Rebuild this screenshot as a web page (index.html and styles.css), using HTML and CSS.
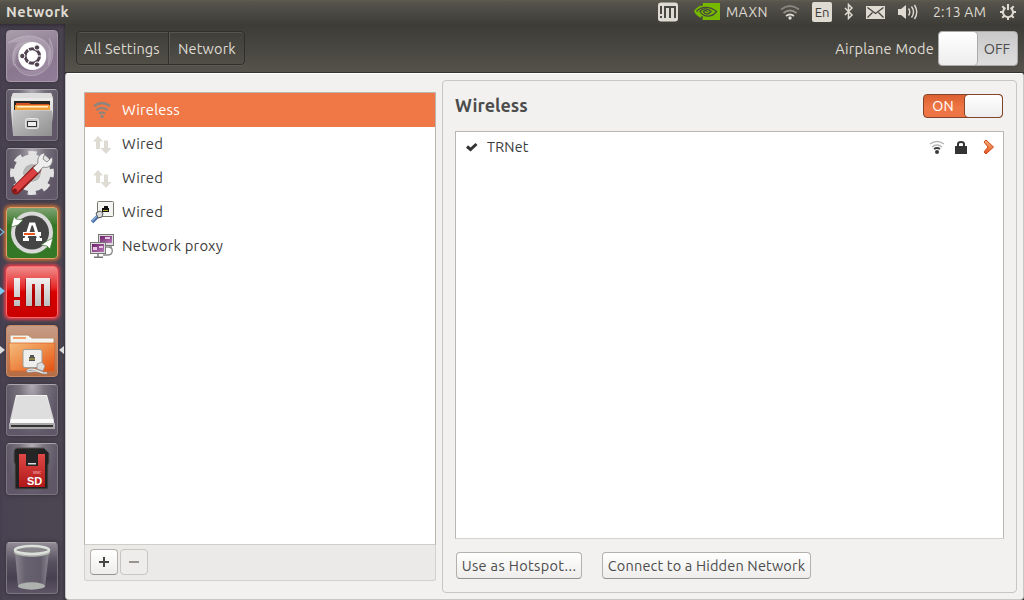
FILE: index.html
```html
<!DOCTYPE html>
<html lang="en">
<head>
<meta charset="utf-8">
<title>Network</title>
<link rel="stylesheet" href="styles.css">
</head>
<body>
<svg width="0" height="0" class="defs">
  <defs>
    <linearGradient id="silver" x2="0" y2="1"><stop offset="0" stop-color="#f2f2f2"/><stop offset="1" stop-color="#bdbdbd"/></linearGradient>
    <linearGradient id="cabinet" x2="1" y2="1"><stop offset="0" stop-color="#c9c9c9"/><stop offset="1" stop-color="#8f8f8f"/></linearGradient>
    <linearGradient id="red" x2="0" y2="1"><stop offset="0" stop-color="#e04848"/><stop offset="1" stop-color="#b01818"/></linearGradient>
    <linearGradient id="folder" x2="1" y2="1"><stop offset="0" stop-color="#f4bd7c"/><stop offset=".5" stop-color="#ee8a48"/><stop offset="1" stop-color="#e4500f"/></linearGradient>
    <linearGradient id="glass" x2="1" y2="0"><stop offset="0" stop-color="#8b8590"/><stop offset=".3" stop-color="#67606e"/><stop offset=".75" stop-color="#625b6a"/><stop offset="1" stop-color="#8b8590"/></linearGradient>
    <linearGradient id="purple" x2="1" y2="1"><stop offset="0" stop-color="#6c1f66"/><stop offset="1" stop-color="#b878b8"/></linearGradient>
    <linearGradient id="flame" x2="0" y2="1"><stop offset="0" stop-color="#f7b57c"/><stop offset="1" stop-color="#e8501c"/></linearGradient>
    <symbol id="updown" viewBox="0 0 24 24"><path fill="#dedbd2" d="M3 9.500 8 4l5 5.500h-3V17H6V9.500zM14 8.500h4V16h3.500L16 22l-5.500-6H14z"/></symbol>
  </defs>
</svg>

<header class="panel">
  <span class="panel-title">Network</span>
  <div class="indicators">
    <svg class="ind im" width="22" height="20" viewBox="0 0 22 20"><rect x="1" y=".5" width="20" height="19" rx="3" fill="#dfdbd2"/><path fill="#494741" d="M3 4h2v8H3zM3 14h2v2H3zM7 4h12v12h-2V6h-3v10h-2V6H9v10H7z"/></svg>
    <svg class="ind nvidia" width="27" height="18" viewBox="0 0 27 18"><path fill="#76b900" d="M9 0h18v17H9v-2C5 14 2 11 1 8c2-3 5-5 8-6z"/><path d="M3.500 8.500C8 3 17 3 23.500 8.500 19 14.500 11 15 7 8.500c3-4 8-3 11 0-3 3.500-6 3.500-7.500 0 1-1.500 3-1 4 .5M9 0v3m0 10v4" fill="none" stroke="#46463f" stroke-width="1.300"/></svg>
    <span class="maxn">MAXN</span>
    <svg class="ind wifi" width="22" height="16" viewBox="0 0 22 16"><g fill="none" stroke-width="1.800"><path d="M2 5.500q9-7 18 0" stroke="#88857d"/><path d="M4.500 9q6.500-5 13 0" stroke="#96938b"/><path d="M7 12q4-3 8 0" stroke="#dfdbd2"/></g><circle cx="11" cy="14" r="1.700" fill="#dfdbd2"/></svg>
    <span class="lang">En</span>
    <svg class="ind bt" width="10" height="18" viewBox="0 0 10 18"><path d="m1 5 7 7-3.500 3.500v-14L8 5l-7 7" fill="none" stroke="#dfdbd2" stroke-width="1.500"/></svg>
    <svg class="ind mail" width="19" height="13" viewBox="0 0 19 13"><path fill="#dfdbd2" d="M0 0h19v13H0z"/><path d="m1.500 1.500 8 6 8-6M1.500 11.500l5-5m11 5-5-5" fill="none" stroke="#45443d" stroke-width="1.300"/></svg>
    <svg class="ind vol" width="21" height="18" viewBox="0 0 21 18"><path fill="#dfdbd2" d="M1 6h3l5-4v14l-5-4H1z"/><path d="M11.500 5.500q2.500 3.500 0 7M14.500 3.500q4 5.500 0 11M17.500 2q4.500 7 0 14" fill="none" stroke="#dfdbd2" stroke-width="1.400"/></svg>
    <span class="clock">2:13 AM</span>
    <svg class="ind gear" width="16" height="16" viewBox="0 0 16 16"><g fill="none" stroke="#dfdbd2" stroke-width="2"><path d="M5.500 3.800a5 5 0 1 0 5 0"/><path d="M8 0v6M0 8h3m10 0h3M8 13v3M2.300 2.300l2.200 2.200m7 7 2.200 2.200m0-11.400-2.200 2.200m-7 7-2.200 2.200"/></g></svg>
  </div>
</header>

<div class="desktop">
  <nav class="launcher">
    <div class="tile dash"><svg viewBox="0 0 52 52"><path fill="#e3d8e2" opacity=".25" d="M2 13Q18 2 34 8c10 4 14 16 8 27 1-14-8-23-20-21C11 16 7 28 11 39 4 31 5 20 12 12z"/><path fill="#e3d8e2" opacity=".2" d="M43 8c7 12 5 28-8 35-11 6-23 1-26-9 9 9 20 9 27 1 8-9 7-19 7-27z"/><g fill="none" stroke="#d9ced8" stroke-opacity=".4"><path d="M2 13Q22 0 37 10c9 6 10 16 5 25M43 8c7 12 5 28-8 35-11 6-23 1-26-9M8 36C4 21 12 12 24 12"/></g><circle cx="26.300" cy="26" r="14" fill="#fff"/><circle cx="26.300" cy="26" r="7.200" fill="none" stroke="#50434f" stroke-width="3"/><path stroke="#fff" stroke-width="1.200" d="M26 26h10M26 26l-5-9M26 26l-5 9"/><circle cx="26.300" cy="26" r="5" fill="#fff"/><g fill="#50434f" stroke="#fff" stroke-width="1"><circle cx="16.300" cy="26" r="2.700"/><circle cx="31" cy="17.500" r="2.700"/><circle cx="31" cy="34.600" r="2.700"/></g></svg></div>

    <div class="tile"><svg viewBox="0 0 52 52"><path fill="url(#silver)" d="M7 4h38l2 6v12l-2 24H7L5 22V10z"/><path fill="#ddd" d="M7 4h38l2 5H5z"/><path fill="#292724" d="M8 12h36v11H8z"/><path fill="#d2522a" d="M10 14h13l2 1h18v7H10z"/><path fill="#f0a03a" d="M9 16h35v6H9z"/><path fill="#fff0c9" d="M11 17h31v1.500H11z"/><path fill="url(#cabinet)" d="M7 21h39v26H7z"/><path fill="#c9c9c9" d="M7 21h39v1H7z"/><rect x="19.500" y="29.500" width="13" height="10" rx="2" fill="#ccc" stroke="#e4e4e4"/><rect x="21.500" y="32.500" width="9" height="5" fill="#eee" stroke="#333"/></svg></div>

    <div class="tile"><svg viewBox="0 0 52 52"><g fill="none" stroke="#e2e2e2"><circle cx="26" cy="25" r="19.500" stroke-width="5" stroke-dasharray="8 7.315" transform="rotate(-12 26 25)"/><circle cx="26" cy="25" r="13.500" stroke-width="10"/></g><circle cx="26" cy="25" r="8.500" fill="#b5b5b5"/><path d="M10 42 31 21" stroke="#871a1a" stroke-width="9" stroke-linecap="round"/><path d="M10 41 31 21" stroke="#dc4040" stroke-width="6.500" stroke-linecap="round"/><path fill="#eee" stroke="#777" stroke-width=".8" d="m27 20 5-5c-1-5 2-10 7-10l-2 6 4 3 5-5c2 7-3 12-9 10l-5 6z"/><circle cx="9" cy="42.500" r="2" fill="#7d1919"/></svg></div>

    <div class="tile updater"><svg viewBox="0 0 52 52"><circle cx="26" cy="25.500" r="21" fill="#d9d9d9"/><circle cx="26" cy="25.500" r="17" fill="#454545"/><path fill="#fff" stroke="#39752d" stroke-width=".7" d="m5 20 3-11 2 3 7 1-5 5zM47 31l-3 11-3-3-6-1 6-4z"/><path d="M19.500 33 24.500 17h3.500l5 16" fill="none" stroke="#fff" stroke-width="3"/><path fill="#fff" d="M17 25h18v4H17z"/><path fill="#e9561c" d="M18 26h11v2H18z"/><path fill="#fff" d="M17 31h6v3h-6zM30 31h6v3h-6z"/></svg></div>

    <div class="tile install"><svg viewBox="0 0 52 52"><path fill="#8b0000" opacity=".5" d="M8 13h6v19H8zM8 34h6v7H8zM19 13h26v28H19z"/><path fill="url(#silver)" d="M8 12h6v19H8zM8 34h6v6H8zM20 12h24v28h-6V18h-3v22h-6V18h-3v22h-6z"/></svg></div>

    <div class="tile network"><svg viewBox="0 0 52 52"><path fill="#f3f3f0" stroke="#b88d70" d="M4 10h18l4 3h22v10H4z"/><path fill="#f1a06b" d="M7 12h13v2H7z"/><path fill="url(#folder)" stroke="#db6024" stroke-width=".7" d="M3 18h46l-1 28H4z"/><rect x="17" y="24.500" width="19" height="18" rx="2" fill="#eeeeec" stroke="#a09c93"/><path fill="#555" d="M23 32h1v-2h4v2h1v4h-6z"/><path d="M23 34h6" stroke="#c8b53a"/><path d="M41 48c-5 1-8-3-14-2-5 1-7 0-5-1 4-2 9 0 15 3" fill="none" stroke="#999" stroke-width="2.500"/><path d="M41 48c-5 1-8-3-14-2-5 1-7 0-5-1 4-2 9 0 15 3" fill="none" stroke="#eee"/><path fill="#ddd" stroke="#888" stroke-width=".7" d="m31 39 5-2 3 4-2 5-6-2z"/></svg></div>

    <div class="tile"><svg viewBox="0 0 52 52"><path fill="url(#silver)" d="M10 11h31l7 25v8H4v-8z"/><path fill="#dedede" d="M11 12h29l7 24H5z"/><path fill="#fafafa" d="M5 35h42l1 4H4z"/><path fill="#aaa" d="M3 39h46v6H3z"/><path fill="#333" d="M5 41h42v2H5z"/></svg></div>

    <div class="tile"><svg viewBox="0 0 52 52"><path fill="#222" stroke="#555" d="M11 5h27l5 5v10l-1 2v24H9V21l-1-2V8q1-3 3-3z"/><path fill="url(#red)" d="M13 11h26v33H13z"/><path fill="#252525" d="M20 6h12v17H20z"/><path fill="#ddd" d="M22 20h8v1.500h-8z"/><text x="27" y="30.500" class="mmc">MMC</text><text x="21" y="42" class="sd">SD</text></svg></div>

    <div class="tile trash"><svg viewBox="0 0 52 52"><path fill="url(#glass)" d="M9 10h34l-4 35q-13 4-27 0z"/><ellipse cx="25.500" cy="44" rx="13.500" ry="3.700" fill="#aeb2ae"/><path d="M8 8v3c4 5 32 5 36 0V8" fill="#aeb3ac"/><ellipse cx="26" cy="8" rx="17" ry="4" fill="#89878c" stroke="#dce0da" stroke-width="2.600"/></svg></div>

    <i class="pip pip-update"></i><i class="pip pip-install"></i><i class="pip pip-net"></i><i class="pip pip-active"></i>
  </nav>

  <main class="window">
    <div class="toolbar">
      <div class="crumbs"><span class="crumb all">All Settings</span><span class="crumb current">Network</span></div>
      <div class="airplane"><span class="airplane-label">Airplane Mode</span><span class="switch off"><b class="knob"></b><span class="state">OFF</span></span></div>
    </div>
    <div class="content">
      <aside class="devices">
        <ul class="device-list">
          <li class="row selected"><svg viewBox="0 0 24 24"><g fill="none" stroke="#8b857d" stroke-width="2.200"><path d="M4 8q8-6 16 0M6.500 12q5.500-4 11 0M9 15.500q3-2 6 0"/></g><circle cx="12" cy="18.500" r="1.700" fill="#8b857d"/></svg><span>Wireless</span></li>
          <li class="row"><svg><use href="#updown"/></svg><span>Wired</span></li>
          <li class="row"><svg><use href="#updown"/></svg><span>Wired</span></li>
          <li class="row"><svg viewBox="0 0 24 24"><rect x="7.500" y="1.500" width="16" height="15" rx="1" fill="#f4f4f2" stroke="#77776f"/><path fill="#111" d="M12 8h2V6h4v2h1v4h-7z"/><path d="M13 10.500h5" stroke="#bba728"/><path d="m2 22 8-8" stroke="#416ba2" stroke-width="3.500"/><path d="m2 21 7-7" stroke="#8eb1db" stroke-width="1.500"/><path fill="#ddd" stroke="#555" d="m6 13 4-2 3 2-1 4-4 1z"/></svg><span>Wired</span></li>
          <li class="row"><svg viewBox="0 0 24 24"><rect x="8.500" y=".5" width="15" height="11" fill="#ddd" stroke="#777"/><path fill="url(#purple)" d="M10 2h12v7H10z"/><path fill="#e6c6e5" d="M15 3h5v2h-5z"/><path d="M13 13h9" stroke="#aaa" stroke-width="2"/><path d="M19 13c5 1 4 8-1 8h-5" fill="none" stroke="#888" stroke-width="1.300"/><rect x=".5" y="8.500" width="15" height="11" fill="#ddd" stroke="#777"/><path fill="url(#purple)" d="M2 10h12v8H2z"/><path fill="#e6c6e5" d="M3 13h4v3H3zM9 12h4v2H9z"/><path d="M8 20v3M4 23.300h9" stroke="#777" stroke-width="1.500"/></svg><span>Network proxy</span></li>
        </ul>
        <div class="list-actions"><button class="btn add" aria-label="Add"></button><button class="btn remove" aria-label="Remove"></button></div>
      </aside>
      <section class="details">
        <div class="details-head"><h1>Wireless</h1><span class="switch on"><span class="state">ON</span><b class="knob"></b></span></div>
        <div class="networks">
          <div class="net">
            <svg class="check" width="12" height="10" viewBox="0 0 12 10"><path d="m1 4.500 3.500 3L10.500 2" fill="none" stroke="#333" stroke-width="3"/></svg>
            <span class="ssid">TRNet</span>
            <svg class="signal" width="16" height="14" viewBox="0 0 16 14"><g fill="none" stroke-width="1.500"><path d="M1 4q7-5 14 0M3 7q5-4 10 0" stroke="#b5b5b5"/><path d="M5 9q3-2 6 0" stroke="#3c3c3c" stroke-width="2"/></g><circle cx="8" cy="12" r="2" fill="#3c3c3c"/></svg>
            <svg class="lock" width="12" height="13" viewBox="0 0 12 13"><path fill="#333" d="M0 5h12v8H0z"/><path d="M3 6V3q0-2 3-2t3 2v3" fill="none" stroke="#333" stroke-width="2"/></svg>
            <svg class="arrow" width="12" height="16" viewBox="0 0 12 16"><path d="m1 3 2-2 7.500 7L3 15l-2-2 4-5z" fill="url(#flame)" stroke="#cf4619" stroke-linejoin="round"/></svg>
          </div>
        </div>
        <div class="details-actions"><button class="btn hotspot">Use as Hotspot...</button><button class="btn hidden-net">Connect to a Hidden Network</button></div>
      </section>
    </div>
  </main>
</div>
</body>
</html>
```

FILE: styles.css
```css
* { box-sizing: border-box; }
body {
  margin: 0; width: 1024px; height: 600px; overflow: hidden;
  display: flex; flex-direction: column;
  font: 15px/20px Ubuntu, "Noto Sans", sans-serif; color: #3c3c3c;
  white-space: nowrap;
}
.defs { position: absolute; }
svg { display: block; flex: none; }

.panel {
  height: 24px; flex: none; display: flex; align-items: center; justify-content: space-between;
  padding: 0 8px 0 6px; color: #dfdbd2;
  background: linear-gradient(#605e50, #55534b 10%, #3e3d38);
}
.panel-title { font-weight: 700; font-size: 14.500px; letter-spacing: .5px; }
.indicators { display: flex; align-items: center; font-size: 14px; }
.im { margin-right: 14px; }
.nvidia { margin-right: 6px; }
.maxn { width: 43px; margin-right: 10px; letter-spacing: .4px; }
.wifi { margin-right: 11px; }
.lang { width: 20px; height: 20px; margin-right: 12px; border-radius: 2px; background: #dfdbd2; color: #3d3c37; font-size: 13px; line-height: 20px; text-align: center; }
.bt { margin-right: 12px; }
.mail { margin-right: 12px; }
.vol { margin-right: 15px; }
.clock { width: 55px; margin-right: 12px; letter-spacing: .2px; }

.desktop { flex: 1; display: flex; min-height: 0; }
.launcher {
  position: relative; width: 65px; flex: none; display: flex; flex-direction: column; gap: 7px;
  padding: 6px 0 0 6px; background: linear-gradient(90deg, #494252, #4b4451 50%, #4c4552 95%, #3c3744);
  box-shadow: inset 0 4px 5px -3px #25222a;
}
.tile {
  width: 52px; height: 52px; flex: none; border: 1px solid #7a7480; border-top-color: #aaa5ad; border-radius: 4px;
  background: radial-gradient(ellipse at 50% 0, #b1adb4 0, #78727e 35%, transparent 75%), linear-gradient(#5d5665, #605768);
  box-shadow: 0 0 4px #332e39;
}
.tile svg { width: 52px; height: 52px; margin: -1px; }
.dash { background: linear-gradient(160deg, #a99dab, #89778e 60%, #927d99); border-color: #a799aa; }
.updater { background: linear-gradient(#80a373, #347426 35%, #347827); border-color: #e4a06a; box-shadow: 0 0 3px 2px #b86a36; }
.install { background: linear-gradient(#f08b8b, #e52626 42%, #d90000 50%, #c80000); border-color: #ff6969; box-shadow: 0 0 3px 2px #d83e4b; }
.network { background: linear-gradient(#c79c85, #b56c43); border-color: #c88a68; }
.trash { margin-top: auto; margin-bottom: 6px; background: linear-gradient(#918c96, #56505f 38%, #474050 70%, #5d5565); }
.mmc { font: 3.500px/1 "Noto Sans", sans-serif; fill: #f3bbbb; }
.sd { font: bold 11px/1 "Liberation Sans", sans-serif; fill: #fff; letter-spacing: -.2px; }
.pip { position: absolute; width: 5px; height: 8px; left: 0; background: #ddd; clip-path: polygon(0 0, 100% 50%, 0 100%); }
.pip-update { top: 204px; background: #71b5db; clip-path: polygon(0 0, 100% 50%, 0 100%, 0 80%, 60% 50%, 0 20%); }
.pip-install { top: 263px; background: #7dc9ef; }
.pip-net { top: 322px; }
.pip-active { top: 322px; left: 59px; clip-path: polygon(100% 0, 0 50%, 100% 100%); }

.window { flex: 1; display: flex; flex-direction: column; min-width: 0; background: #3c3b37; }
.toolbar {
  height: 49px; flex: none; display: flex; align-items: center; justify-content: space-between;
  padding: 0 6px 0 11px; color: #dfdbd2; border-bottom: 1px solid #34332f;
  background: linear-gradient(#3c3b37, #54524a);
}
.crumbs { display: flex; height: 34px; border: 1px solid #302f2b; border-radius: 4px; box-shadow: 0 1px 0 #5c5a52, inset 0 1px 0 #57554e; }
.crumb { display: flex; align-items: center; padding: 2px 0 0 7px; font-size: 14.500px; letter-spacing: .17px; }
.all { width: 92px; border-right: 1px solid #302f2b; }
.current { width: 75px; padding-left: 8px; border-left: 1px solid #59574f; }
.airplane { display: flex; align-items: center; gap: 4px; font-size: 14.500px; }
.airplane-label { letter-spacing: .25px; padding-top: 2px; }
.switch { display: flex; align-items: stretch; border-radius: 4px; }
.state { flex: 1; display: flex; align-items: center; justify-content: center; }
.off { width: 80px; height: 35px; border: 1px solid #aaa; background: linear-gradient(#c9c9c9, #dedede); color: #4c4c4c; font-size: 14.500px; }
.off .state { padding-top: 2px; }
.knob { width: 38px; border-radius: 4px; background: linear-gradient(#fff, #ededed); box-shadow: 0 0 0 1px #aaa; }
.content {
  flex: 1; display: flex; gap: 6px; min-height: 0; padding: 6px 6px 6px 18px;
  background: #f2f1f0; border: 1px solid #c9c7c4; border-top-color: #fff; border-radius: 3px 3px 4px 4px;
}
.devices { width: 352px; display: flex; flex-direction: column; margin: 12px 0; }
.device-list { flex: 1; margin: 0; padding: 0; list-style: none; background: #fff; border: 1px solid #b9b5af; border-bottom-color: #d0cdc9; }
.row { height: 34px; display: flex; align-items: center; gap: 8px; padding-left: 5px; font-size: 14.800px; letter-spacing: .2px; }
.row svg { width: 24px; height: 24px; }
.selected { background: #f07746; color: #fff; }
.list-actions { height: 36px; display: flex; align-items: center; gap: 2px; padding: 0 0 1px 5px; border: 1px solid #d4d2cf; border-top: 0; border-radius: 0 0 3px 3px; background: #ebeae9; }
.btn {
  height: 27px; padding: 0; border: 1px solid #b4b1ac; border-bottom-color: #96938f; border-radius: 4px;
  background: linear-gradient(#fff, #eeedeb); color: #4c4c4c; font: 14.500px/20px Ubuntu, "Noto Sans", sans-serif;
}
.add, .remove { width: 28px; height: 26px; display: grid; place-items: center; }
.add::before, .add::after, .remove::before { content: ""; grid-area: 1 / 1; width: 10px; height: 2px; background: #464646; }
.add::after { width: 2px; height: 10px; }
.remove { border-color: #c8c6c3; background: #eeedec; }
.remove::before { background: #99958e; }
.details { flex: 1; display: flex; flex-direction: column; padding: 0 12px 13px; border: 1px solid #c8c6c3; border-radius: 4px; }
.details-head { height: 50px; display: flex; align-items: center; justify-content: space-between; padding-right: 1px; }
h1 { margin: 0 0 2px; font-size: 17.900px; line-height: 24px; color: #4c4c4c; }
.on { width: 80px; height: 24px; border: 1px solid #80452c; background: linear-gradient(#dc6031, #f07746 60%, #eb7242); color: #fff; font-size: 14.300px; }
.on .state { padding-right: 3px; }
.on .knob { width: 37px; box-shadow: 0 0 0 1px #80452c; }
.networks { flex: 1; background: #fff; border: 1px solid #bab7b2; border-bottom-color: #d5d2cf; }
.net { display: flex; align-items: center; height: 30px; padding: 0 8px 0 10px; }
.check { margin-right: 9px; }
.ssid { margin-right: auto; font-size: 14.300px; letter-spacing: .2px; }
.signal { margin-right: 10px; }
.lock { margin-right: 16px; }
.details-actions { display: flex; gap: 20px; padding: 13px 0 0 1px; }
.hotspot { width: 126px; letter-spacing: .35px; }
.hidden-net { width: 209px; letter-spacing: .17px; }
```
